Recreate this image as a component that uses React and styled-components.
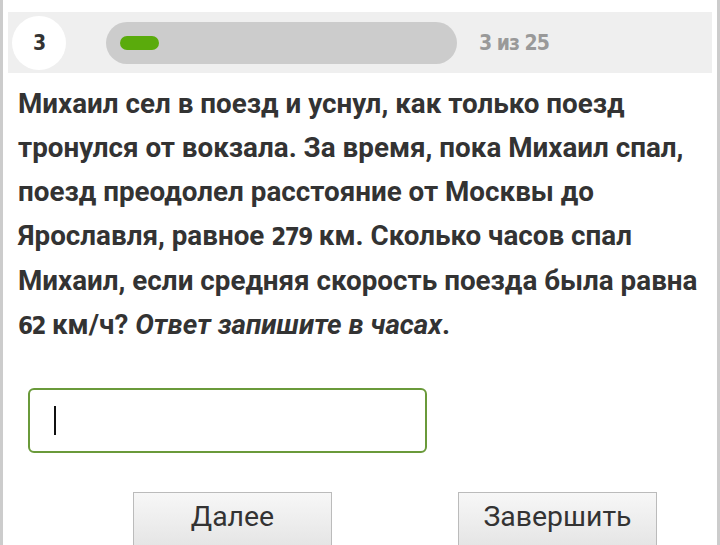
import styled, { createGlobalStyle } from 'styled-components';

const GlobalStyle = createGlobalStyle`
  html, body {
    margin: 0;
    padding: 0;
    background: #fff;
  }
`;

const Page = styled.div`
  width: 714px;
  height: 545px;
  overflow: hidden;
  border-left: 3px solid #cccccc;
  border-right: 3px solid #cccccc;
  background: #fff;
  font-family: Roboto, "Noto Sans", sans-serif;
`;

const Header = styled.div`
  margin: 12px 5px 0;
  height: 61px;
  background: #efefef;
  display: flex;
  align-items: center;
`;

const Condensed = styled.span`
  font-family: "DejaVu Sans Condensed", "DejaVu Sans", sans-serif;
  font-stretch: condensed;
  font-weight: bold;
  letter-spacing: -1px;
`;

const Circle = styled.div`
  width: 54px;
  height: 54px;
  margin-left: 4px;
  border-radius: 50%;
  background: #fff;
  display: flex;
  align-items: center;
  justify-content: center;
  color: #333;
  font-size: 21px;
`;

const Track = styled.div`
  width: 351px;
  height: 42px;
  margin-left: 40px;
  border-radius: 21px;
  background: #cccccc;
  display: flex;
  align-items: center;
  padding-left: 14px;
  box-sizing: border-box;
`;

const Fill = styled.div`
  height: 14px;
  border-radius: 7px;
  background: #5aab0c;
`;

const Counter = styled(Condensed)`
  margin-left: 22px;
  color: #999;
  font-size: 21px;
`;

const Question = styled.p`
  margin: 9px 0 0 15px;
  font-size: 27.8px;
  font-weight: bold;
  line-height: 44px;
  color: #333;
`;

const Line = styled.span`
  display: block;
  white-space: nowrap;
`;

const Num = styled(Condensed)`
  font-size: 24px;
  letter-spacing: -1.5px;
`;

const Hint = styled.em`
  font-style: italic;
`;

const Answer = styled.div`
  margin: 40px 0 0 25px;
  width: 399px;
  height: 65px;
  box-sizing: border-box;
  border: 2px solid #6a9a3a;
  border-radius: 6px;
  display: flex;
  align-items: center;
  padding-left: 24px;
`;

const Caret = styled.div`
  width: 2px;
  height: 29px;
  background: #111;
`;

const Actions = styled.div`
  display: flex;
  gap: 126px;
  margin: 39px 0 0 130px;
`;

const Button = styled.button`
  width: 199px;
  height: 58px;
  border: 1px solid #bbbbbb;
  background: linear-gradient(#f7f7f7, #e4e4e4);
  font-family: Roboto, "Noto Sans", sans-serif;
  font-size: 28.4px;
  color: #333;
  padding: 0 0 10px;
  cursor: pointer;
`;

export default function App() {
  const current = 3;
  const total = 25;
  return (
    <>
      <GlobalStyle />
      <Page>
        <Header>
          <Circle>
            <Condensed>{current}</Condensed>
          </Circle>
          <Track>
            <Fill style={{ width: 39 }} />
          </Track>
          <Counter>
            {current} из {total}
          </Counter>
        </Header>
        <Question>
          <Line>Михаил сел в поезд и уснул, как только поезд</Line>
          <Line>тронулся от вокзала. За время, пока Михаил спал,</Line>
          <Line>поезд преодолел расстояние от Москвы до</Line>
          <Line>
            Ярославля, равное <Num>279</Num> км. Сколько часов спал
          </Line>
          <Line>Михаил, если средняя скорость поезда была равна</Line>
          <Line>
            <Num>62</Num> км/ч? <Hint>Ответ запишите в часах</Hint>.
          </Line>
        </Question>
        <Answer>
          <Caret />
        </Answer>
        <Actions>
          <Button>Далее</Button>
          <Button>Завершить</Button>
        </Actions>
      </Page>
    </>
  );
}
